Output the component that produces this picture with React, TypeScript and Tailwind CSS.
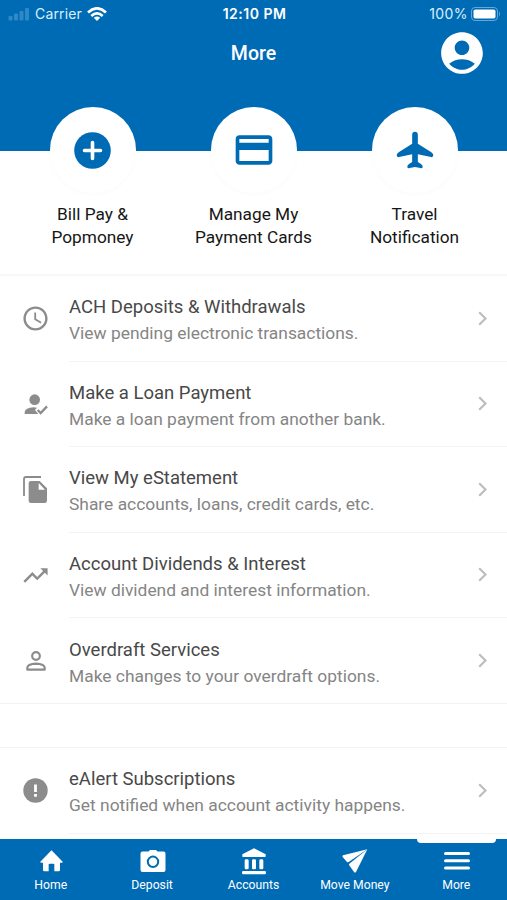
import type { ReactNode } from "react";
import {
  MdAccessTime,
  MdAccountCircle,
  MdCreditCard,
  MdTrendingUp,
} from "react-icons/md";

interface Row {
  icon: ReactNode;
  title: string;
  subtitle: string;
}

const PlusIcon = () => (
  <svg className="h-[37px] w-[37px]" viewBox="0 0 37 37" fill="none">
    <circle cx="18.500" cy="18.500" r="18.300" fill="currentColor" />
    <path d="M18.500 10.500V26.500M10.500 18.500H26.500" stroke="white" strokeWidth="3.600" strokeLinecap="round" />
  </svg>
);

const PersonCheckIcon = () => (
  <svg className="h-[21px] w-6" viewBox="0 0 72 63" fill="currentColor">
    <circle cx="32" cy="17" r="16" />
    <path d="M2 60V54Q3 42 29 40L39 41L33 48L43 60Z" />
    <path d="M41 48L50 57L69 37" fill="none" stroke="currentColor" strokeWidth="7" />
  </svg>
);

const PersonIcon = () => (
  <svg className="h-5 w-5" viewBox="0 0 60 60" fill="none" stroke="currentColor" strokeWidth="6.500">
    <circle cx="30" cy="15" r="11.500" />
    <path d="M4 56V50Q5 39 30 38Q55 39 56 50V56Z" strokeLinejoin="round" />
  </svg>
);

const AlertIcon = () => (
  <svg className="h-[25px] w-[25px]" viewBox="0 0 25 25" fill="none">
    <circle cx="12.500" cy="12.500" r="12.200" fill="currentColor" />
    <path d="M12.500 6.500V14M12.500 16V18.800" stroke="white" strokeWidth="2.800" />
  </svg>
);

const FilesIcon = () => (
  <svg className="h-7 w-[25px]" viewBox="0 0 75 84" fill="currentColor">
    <path d="M54 3H9Q3 3 3 9V60" fill="none" stroke="currentColor" strokeWidth="5.500" />
    <path
      fillRule="evenodd"
      d="M24 15H50L72 37V74Q72 81 65 81H24Q17 81 17 74V22Q17 15 24 15ZM47 21V41H66Z"
    />
  </svg>
);

const PlaneIcon = () => (
  <svg className="h-[38px] w-[38px]" viewBox="0 0 114 114" fill="currentColor">
    <path d="M57 2Q65.500 2 65.500 11V38L106 64Q112 68 112 73Q111 80 105 78L65.500 70V93L76 100Q81 104 80 109Q78 113 73 111L57 108L41 111Q36 113 34 109Q33 104 38 100L48.500 93V70L9 78Q3 80 2 73Q2 68 8 64L48.500 38V11Q48.500 2 57 2Z" />
  </svg>
);

const HomeIcon = () => (
  <svg className="h-[22px] w-[23px]" viewBox="0 0 69 66" fill="currentColor">
    <path d="M34.500 1L68 35Q69 38 65 38H60V60Q60 64 56 64H43V43Q43 41 40 41H29Q26 41 26 43V64H13Q9 64 9 60V38H4Q0 38 1 35Z" />
  </svg>
);

const BankIcon = () => (
  <svg className="h-[27px] w-[26px]" viewBox="0 0 78 81" fill="currentColor">
    <path d="M39 1L74 19V25Q74 27 72 27H6Q4 27 4 25V19Z" />
    <rect x="11" y="34" width="12" height="30" rx="4" />
    <rect x="33" y="34" width="12" height="30" rx="4" />
    <rect x="55" y="34" width="12" height="30" rx="4" />
    <rect x="3" y="69" width="72" height="10" rx="4" />
  </svg>
);

const CameraIcon = () => (
  <svg className="h-6 w-[26px]" viewBox="0 0 26 24" fill="none">
    <path
      d="M8.500 2.500L10 1H16L17.500 2.500H23.500Q25.500 2.500 25.500 4.500V21Q25.500 23 23.500 23H2.500Q.5 23 .5 21V4.500Q.5 2.500 2.500 2.500Z"
      fill="currentColor"
    />
    <circle cx="13" cy="12.800" r="5.200" stroke="#006bb5" strokeWidth="2" />
  </svg>
);

const SendIcon = () => (
  <svg className="h-6 w-[26px]" viewBox="0 0 78 72" fill="currentColor">
    <path d="M76 1L3 19Q0 21 2 24L15 39Q17 41 20 39Z" />
    <path d="M76 1L42 69Q39 72 36 69L21 48Q20 46 22 44Z" />
  </svg>
);

const MenuIcon = () => (
  <svg className="h-5 w-[26px]" viewBox="0 0 26 20" stroke="currentColor" strokeWidth="3" strokeLinecap="round">
    <path d="M1.500 2.500H24.500M1.500 9.800H24.500M1.500 17H24.500" />
  </svg>
);

const shortcuts = [
  { icon: <PlusIcon />, lines: ["Bill Pay &", "Popmoney"] },
  { icon: <MdCreditCard size={44} />, lines: ["Manage My", "Payment Cards"] },
  { icon: <PlaneIcon />, lines: ["Travel", "Notification"] },
];

const rows: Row[] = [
  { icon: <MdAccessTime size={29} />, title: "ACH Deposits & Withdrawals", subtitle: "View pending electronic transactions." },
  { icon: <PersonCheckIcon />, title: "Make a Loan Payment", subtitle: "Make a loan payment from another bank." },
  { icon: <FilesIcon />, title: "View My eStatement", subtitle: "Share accounts, loans, credit cards, etc." },
  { icon: <MdTrendingUp size={29} />, title: "Account Dividends & Interest", subtitle: "View dividend and interest information." },
  { icon: <PersonIcon />, title: "Overdraft Services", subtitle: "Make changes to your overdraft options." },
];

const alertRow: Row = {
  icon: <AlertIcon />,
  title: "eAlert Subscriptions",
  subtitle: "Get notified when account activity happens.",
};

const tabs = [
  { label: "Home", icon: <HomeIcon /> },
  { label: "Deposit", icon: <CameraIcon /> },
  { label: "Accounts", icon: <BankIcon /> },
  { label: "Move Money", icon: <SendIcon /> },
  { label: "More", icon: <MenuIcon />, active: true },
];

function StatusBar() {
  return (
    <div className="grid h-7 grid-cols-3 items-center pl-2 pr-[6px] font-['Inter',sans-serif] text-[14px] leading-none text-[#d9efff]">
      <div className="flex items-center">
        <svg className="mr-[5px] h-[14px] w-[22px]" viewBox="0 0 22 14" fill="#3088c6">
          <rect x="0.500" y="9" width="4" height="4.500" rx="1" />
          <rect x="6" y="6.500" width="4" height="7" rx="1" />
          <rect x="11.500" y="4" width="4" height="9.500" rx="1" />
          <rect x="17" y="1" width="4" height="12.500" rx="1" />
        </svg>
        <span className="tracking-[0.15px]">Carrier</span>
        <svg className="ml-[5px] h-[15px] w-5" viewBox="0 0 20 15" fill="none" stroke="white" strokeWidth="2.700">
          <path d="M1 5.500Q10 -2.800 19 5.500M4.300 9Q10 3.800 15.700 9" />
          <path d="M10 14L6.800 10.800Q10 8.300 13.200 10.800Z" fill="white" stroke="none" />
        </svg>
      </div>
      <span className="text-center text-[14px] font-semibold tracking-[0.500px] text-white">12:10 PM</span>
      <div className="flex items-center justify-end">
        <span className="tracking-[0.400px]">100%</span>
        <svg className="ml-[3px] h-[14px] w-[30px]" viewBox="0 0 30 14">
          <rect x="0.500" y="0.500" width="26" height="13" rx="3.500" fill="none" stroke="#65a8d7" />
          <rect x="2.500" y="2.500" width="22" height="9" rx="1.800" fill="white" />
          <path d="M28 4.500Q30 7 28 9.500Z" fill="#65a8d7" />
        </svg>
      </div>
    </div>
  );
}

function ListRow({ icon, title, subtitle, last }: Row & { last?: boolean }) {
  return (
    <div className="flex h-[85.500px] shrink-0">
      <div className="flex w-[69px] items-center justify-center pl-[2px] text-[#8c8c8c]">{icon}</div>
      <div className={last ? "flex flex-1 items-center pr-5" : "flex flex-1 items-center border-b border-[#f4f4f4] pr-5"}>
        <div className="flex-1 whitespace-nowrap pt-1">
          <div className="text-[18.500px] leading-[26px] text-[#484848]">{title}</div>
          <div className="text-[17.400px] leading-[26px] text-[#858585]">{subtitle}</div>
        </div>
        <svg className="h-[15px] w-[9px]" viewBox="0 0 9 15" fill="none" stroke="#bdbdbd" strokeWidth="2.200">
          <path d="M1.200 1.300L7.500 7.500L1.200 13.700" />
        </svg>
      </div>
    </div>
  );
}

export default function App() {
  return (
    <div className="flex h-[900px] w-[507px] flex-col overflow-hidden bg-white font-['Roboto',sans-serif]">
      <header className="h-[151px] shrink-0 bg-[#006bb5] text-white">
        <StatusBar />
        <div className="grid h-12 grid-cols-3 items-center">
          <span />
          <h1 className="pt-px text-center text-[19.500px] font-medium">More</h1>
          <MdAccountCircle size={50} className="mr-5 justify-self-end" />
        </div>
      </header>

      <section className="-mt-11 grid h-[169px] shrink-0 grid-cols-3 border-b-2 border-[#f7f7f7] px-3">
        {shortcuts.map((s) => (
          <div key={s.lines[0]} className="flex flex-col items-center">
            <div className="flex h-[86px] w-[86px] shrink-0 items-center justify-center rounded-full bg-white text-[#006bb5] shadow-[0_2px_5px_rgba(0,0,0,0.02)]">
              {s.icon}
            </div>
            <div className="mt-[10px] whitespace-nowrap text-center text-[17.250px] leading-[22.500px] text-[#161616]">
              {s.lines[0]}
              <br />
              {s.lines[1]}
            </div>
          </div>
        ))}
      </section>

      <main className="flex min-h-0 flex-1 flex-col overflow-hidden">
        {rows.map((row, i) => (
          <ListRow key={row.title} {...row} last={i === rows.length - 1} />
        ))}
        <div className="-mt-px h-[45.500px] shrink-0 border-y border-[#f2f2f2]" />
        <ListRow {...alertRow} />
      </main>

      <nav className="grid h-[61px] shrink-0 grid-cols-5 bg-[#006bb5] text-white">
        {tabs.map((tab) => (
          <div key={tab.label} className="relative flex flex-col items-center">
            {tab.active && <div className="absolute top-0 h-1 w-[79px] rounded-b bg-white" />}
            <div className="flex h-11 items-center justify-center pl-px">{tab.icon}</div>
            <span className="-mt-[6px] whitespace-nowrap text-[12.200px] leading-4">{tab.label}</span>
          </div>
        ))}
      </nav>
    </div>
  );
}
